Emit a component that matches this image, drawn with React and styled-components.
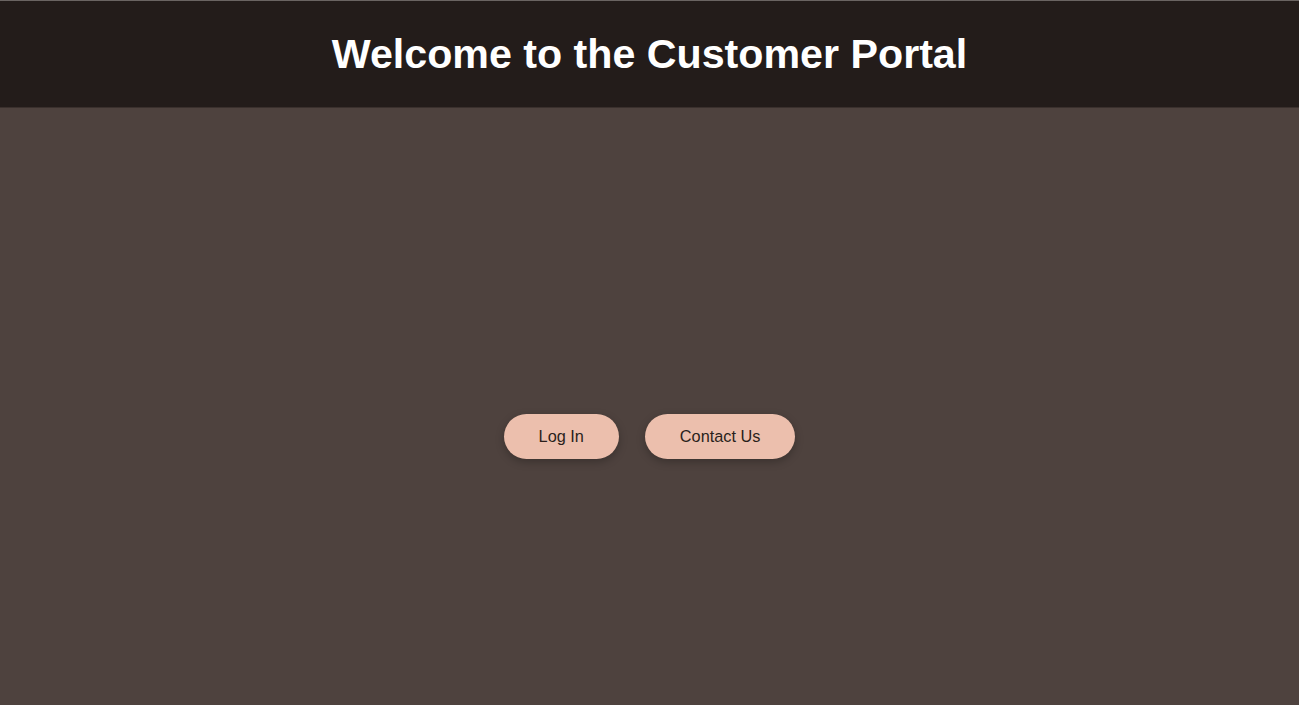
import React from "react";
import styled, { createGlobalStyle } from "styled-components";

const Global = createGlobalStyle`
  html, body { margin: 0; padding: 0; }
  body {
    background: #4e423e;
    font-family: "Liberation Sans", Arial, sans-serif;
    overflow: hidden;
  }
  * { box-sizing: border-box; }
`;

const Page = styled.div`
  display: flex;
  flex-direction: column;
  min-height: 100vh;
  border-top: 1px solid #6a6462;
`;

const Header = styled.header`
  background: #231c1a;
  height: 107px;
  display: flex;
  align-items: center;
  justify-content: center;
  border-bottom: 1px solid #3a302d;
`;

const Title = styled.h1`
  margin: 0;
  color: #ffffff;
  font-size: 41.2px;
  font-weight: 700;
  line-height: 1;
  padding-top: 2px;
`;

const Main = styled.main`
  flex: 1;
  display: flex;
  align-items: center;
  justify-content: center;
  gap: 26px;
  padding-top: 60px;
`;

const Button = styled.button`
  font-family: "Liberation Sans", Arial, sans-serif;
  font-size: 16.3px;
  color: #2a1f1c;
  background: #ecbfad;
  border: none;
  border-radius: 23px;
  height: 45px;
  padding: 0 35px;
  box-shadow: 0 3px 8px rgba(0, 0, 0, 0.25);
  cursor: pointer;
`;

export default function App() {
  return (
    <>
      <Global />
      <Page>
        <Header>
          <Title>Welcome to the Customer Portal</Title>
        </Header>
        <Main>
          <Button>Log In</Button>
          <Button>Contact Us</Button>
        </Main>
      </Page>
    </>
  );
}
